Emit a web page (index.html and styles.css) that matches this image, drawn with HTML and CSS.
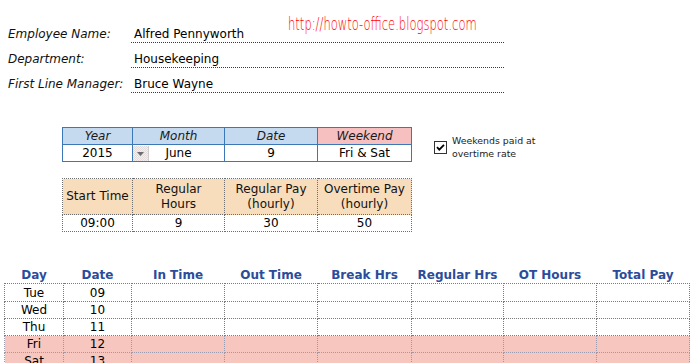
FILE: index.html
```html
<!DOCTYPE html>
<html>
<head>
<meta charset="utf-8">
<link rel="stylesheet" href="styles.css">
</head>
<body>
<div class="page">
  <div class="info">
    <div class="row"><span class="label">Employee Name:</span><span class="value">Alfred Pennyworth</span></div>
    <div class="row"><span class="label">Department:</span><span class="value">Housekeeping</span></div>
    <div class="row"><span class="label">First Line Manager:</span><span class="value">Bruce Wayne</span></div>
    <div class="url">http://howto-office.blogspot.com</div>
  </div>

  <div class="settings">
    <div class="tables">
      <table class="t-date">
        <colgroup><col class="c1"><col class="c2"><col class="c3"><col class="c4"></colgroup>
        <tr class="head">
          <th>Year</th><th>Month</th><th>Date</th><th class="wk">Weekend</th>
        </tr>
        <tr class="data">
          <td>2015</td>
          <td class="month"><span class="drop"><svg width="7" height="4" viewBox="0 0 7 4"><path d="M0 0h7L3.5 4z" fill="#6b6b6b"/></svg></span>June</td>
          <td>9</td>
          <td>Fri &amp; Sat</td>
        </tr>
      </table>

      <table class="t-rate">
        <colgroup><col class="c1"><col class="c2"><col class="c3"><col class="c4"></colgroup>
        <tr class="head">
          <th>Start Time</th><th>Regular<br>Hours</th><th>Regular Pay<br>(hourly)</th><th>Overtime Pay<br>(hourly)</th>
        </tr>
        <tr class="data">
          <td>09:00</td><td>9</td><td>30</td><td>50</td>
        </tr>
      </table>
    </div>

    <div class="note">
      <svg class="check" width="13" height="13" viewBox="0 0 13 13">
        <rect x="0.5" y="0.5" width="12" height="12" fill="#fff" stroke="#333"/>
        <path d="M3 6.2l2.3 2.4L10 3.8" fill="none" stroke="#000" stroke-width="1.8"/>
      </svg>
      <span class="note-text">Weekends paid at<br>overtime rate</span>
    </div>
  </div>

  <table class="sheet">
    <colgroup>
      <col class="s1"><col class="s2"><col class="s3"><col class="s4"><col class="s5"><col class="s6"><col class="s7"><col class="s8">
    </colgroup>
    <thead>
      <tr>
        <th>Day</th><th>Date</th><th>In Time</th><th>Out Time</th><th>Break Hrs</th><th>Regular Hrs</th><th>OT Hours</th><th>Total Pay</th>
      </tr>
    </thead>
    <tbody>
      <tr class="first"><td>Tue</td><td>09</td><td></td><td></td><td></td><td></td><td></td><td></td></tr>
      <tr><td>Wed</td><td>10</td><td></td><td></td><td></td><td></td><td></td><td></td></tr>
      <tr><td>Thu</td><td>11</td><td></td><td></td><td></td><td></td><td></td><td></td></tr>
      <tr class="weekend"><td>Fri</td><td>12</td><td></td><td></td><td></td><td></td><td></td><td></td></tr>
      <tr class="weekend"><td>Sat</td><td>13</td><td></td><td></td><td></td><td></td><td></td><td></td></tr>
    </tbody>
  </table>
</div>
</body>
</html>
```

FILE: styles.css
```css
html, body {
  margin: 0;
  padding: 0;
  background: #fff;
  overflow: hidden;
}

.page {
  font-family: "DejaVu Sans", Verdana, sans-serif;
  font-size: 12px;
  color: #000;
  padding-top: 18px;
}

/* ---------- employee info ---------- */
.info {
  position: relative;
  padding-left: 8px;
}

.row {
  display: flex;
  height: 25px;
}

.label {
  width: 123px;
  font-style: italic;
  padding-top: 9px;
  line-height: 15px;
  color: #111;
}

.value {
  padding-left: 3px;
  padding-top: 9px;
  line-height: 15px;
  border-bottom: 1px dotted #3a3a3a;
  box-sizing: border-box;
  height: 25px;
  width: 373px;
}

.url {
  position: absolute;
  left: 288px;
  top: -4px;
  font-size: 17px;
  font-weight: 300;
  color: #ff0000;
  white-space: nowrap;
  transform: scaleX(0.68);
  transform-origin: left top;
}

/* ---------- settings tables ---------- */
.settings {
  display: flex;
  align-items: flex-start;
  margin-top: 34px;
}

.tables {
  margin-left: 62px;
  display: flex;
  flex-direction: column;
  gap: 16px;
}

table {
  border-collapse: collapse;
  table-layout: fixed;
}

.c1 { width: 70px; }
.c2 { width: 92px; }
.c3 { width: 93px; }
.c4 { width: 94px; }

.t-date, .t-rate {
  width: 349px;
}

.t-date th, .t-date td {
  border: 1px solid #3c78b8;
  padding: 0;
  text-align: center;
  line-height: 14px;
}

.t-date th {
  height: 16px;
  font-weight: normal;
  font-style: italic;
  color: #1a1a1a;
  background: repeating-conic-gradient(#aecbe8 0 25%, #dce9f6 0 50%) 0 0 / 2px 2px;
}

.t-date th.wk {
  background: repeating-conic-gradient(#f1aaaa 0 25%, #fad6d6 0 50%) 0 0 / 2px 2px;
}

.t-date td {
  height: 16px;
}

.t-date td.month {
  position: relative;
}

.drop {
  position: absolute;
  left: 0;
  top: 1px;
  width: 16px;
  height: 15px;
  display: flex;
  align-items: center;
  justify-content: center;
  background: repeating-conic-gradient(#e2dcdc 0 25%, #f4f0f0 0 50%) 0 0 / 2px 2px;
  border-right: 1px solid #d0cccc;
  box-sizing: border-box;
}

.t-rate th, .t-rate td {
  border: 1px dotted #6e6e6e;
  padding: 0;
  text-align: center;
}

.t-rate th {
  height: 35px;
  font-weight: normal;
  line-height: 15px;
  color: #111;
  background: repeating-conic-gradient(#f3cfa6 0 25%, #faead2 0 50%) 0 0 / 2px 2px;
}

.t-rate td {
  height: 16px;
  line-height: 14px;
}

.note {
  display: flex;
  align-items: center;
  gap: 5px;
  margin-left: 22px;
  margin-top: 7px;
}

.check {
  display: block;
  flex: none;
}

.note-text {
  font-size: 9.4px;
  line-height: 13px;
  color: #222;
}

/* ---------- timesheet ---------- */
.sheet {
  margin-left: 4px;
  margin-top: 31px;
  width: 685px;
}

.s1 { width: 59px; }
.s2 { width: 68px; }
.s3 { width: 93px; }
.s4 { width: 93px; }
.s5 { width: 94px; }
.s6 { width: 92px; }
.s7 { width: 93px; }
.s8 { width: 93px; }

.sheet th {
  height: 19px;
  padding: 0 0 1px;
  vertical-align: bottom;
  line-height: 14px;
  font-weight: bold;
  color: #2b4c9b;
  text-align: center;
  border: none;
}

.sheet td {
  border: 1px dotted #7a7a7a;
  height: 16px;
  padding: 0;
  line-height: 14px;
  text-align: center;
}

.sheet tr.first td {
  height: 17px;
}

.sheet tr.weekend td {
  background: repeating-conic-gradient(#f3b9b1 0 25%, #fbd3cd 0 50%) 0 0 / 2px 2px;
  border-color: #9a9aae;
}
```
